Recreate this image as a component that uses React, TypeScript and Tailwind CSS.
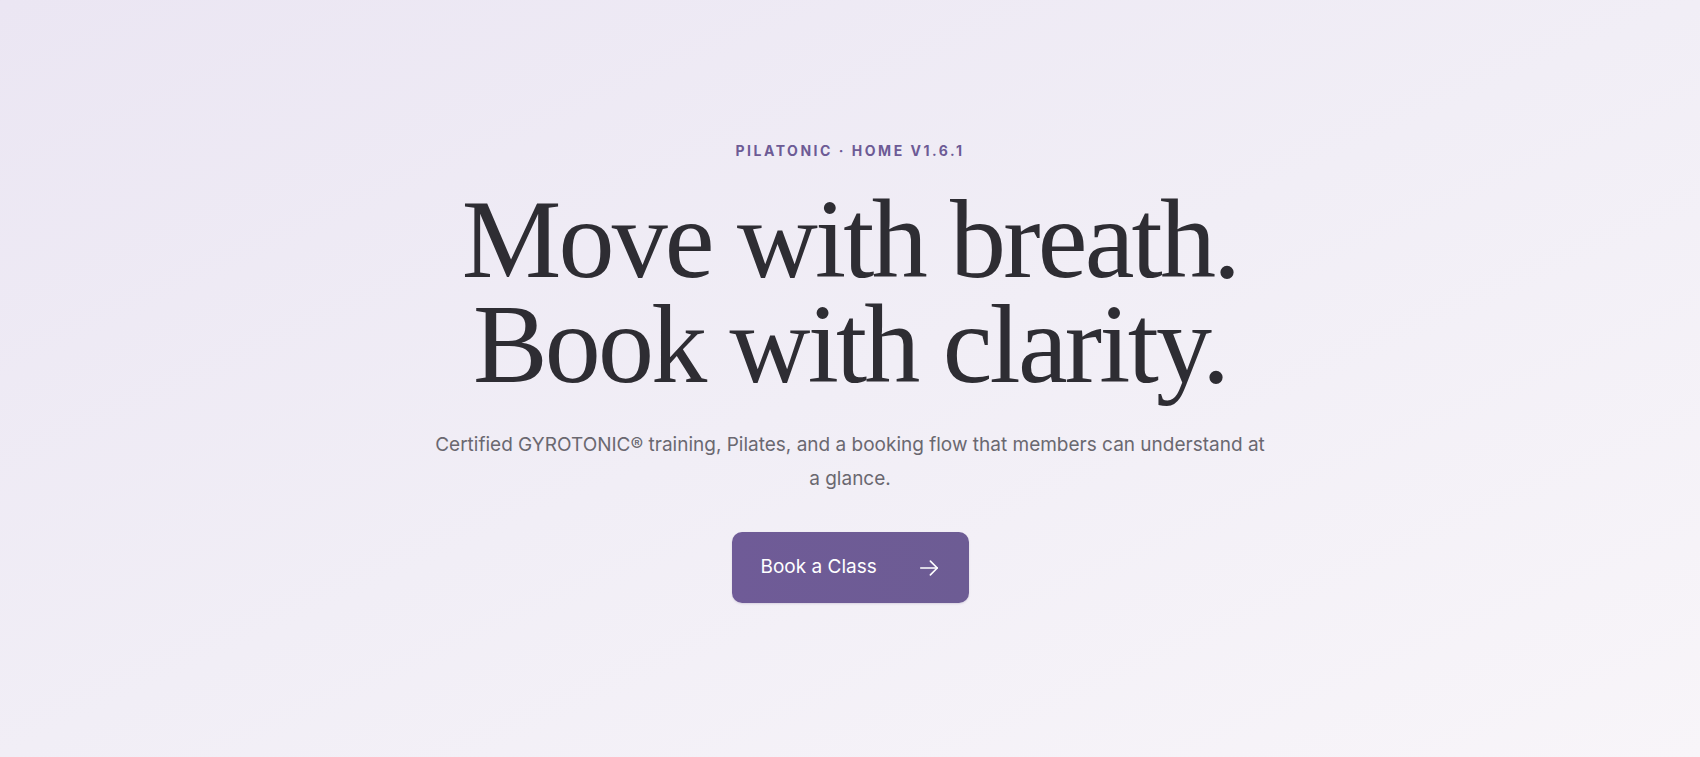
import React from "react";

export default function App() {
  return (
    <div className="min-h-screen w-full bg-gradient-to-br from-[#ebe6f3] via-[#f1eef6] to-[#f8f5f9] pt-[141px] pb-10 flex flex-col items-center text-center font-['Inter','Liberation_Sans',sans-serif]">
      <div className="text-[14px] leading-[20px] font-bold tracking-[0.18em] text-[#6d5b95]">
        PILATONIC · HOME V1.6.1
      </div>
      <h1 className="mt-[26px] flex flex-col items-center text-[112px] leading-[105px] tracking-[-0.025em] text-[#2e2d33] font-normal font-['Liberation_Serif','DejaVu_Serif',serif]">
        <span>Move with breath.</span>
        <span>Book with clarity.</span>
      </h1>
      <p className="mt-[31px] max-w-[840px] text-[19px] leading-[34px] text-[#6a6870]">
        Certified GYROTONIC® training, Pilates, and a booking flow that members can understand at a glance.
      </p>
      <button className="mt-[36px] h-[71px] w-[237px] rounded-[10px] bg-gradient-to-r from-[#6f5b97] to-[#6d5c94] pl-[29px] pr-[29px] flex items-center justify-between text-white text-[19px] shadow-[0_1px_2px_rgba(60,40,100,0.15)]">
        <span>Book a Class</span>
        <svg width="22" height="22" viewBox="0 0 24 24" fill="none" stroke="currentColor" strokeWidth="1.8" strokeLinecap="round" strokeLinejoin="round">
          <path d="M3 12h18" />
          <path d="M13.5 4.5L21 12l-7.5 7.5" />
        </svg>
      </button>
    </div>
  );
}
